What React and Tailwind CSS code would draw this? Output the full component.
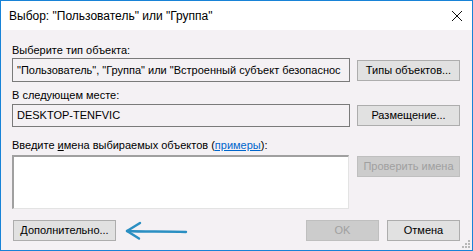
export default function App() {
  const font = { fontFamily: '"Liberation Sans", Arial, sans-serif' }
  const btn = 'h-[21px] border border-[#adadad] bg-[#e1e1e1] text-[11px] text-black flex items-center justify-center whitespace-nowrap'
  const btnOff = 'h-[21px] border border-[#bfbfbf] bg-[#cccccc] text-[11px] text-[#a0a0a0] flex items-center justify-center whitespace-nowrap'

  return (
    <div className="w-[473px] h-[251px] border border-[#1883d7] flex flex-col bg-[#f4f1f4]" style={font}>
      {/* Title bar */}
      <div className="h-[29px] bg-white flex items-center justify-between pl-[8px] pr-[8px] shrink-0">
        <span className="text-[12px] text-black leading-none">Выбор: "Пользователь" или "Группа"</span>
        <svg width="12" height="12" viewBox="0 0 12 12" className="mr-[1px]">
          <path d="M1 1l10 10M11 1L1 11" stroke="#111" strokeWidth="1" />
        </svg>
      </div>

      {/* Body */}
      <div className="flex-1 flex flex-col px-[11px] pt-[13px] relative">
        <div className="text-[11px] leading-[15px] text-black">Выберите тип объекта:</div>
        <div className="flex items-center">
          <div className="w-[338px] h-[24px] border border-[#7a7a7a] px-[4px] flex items-center overflow-hidden whitespace-nowrap text-[11px] text-black">
            "Пользователь", "Группа" или "Встроенный субъект безопаснос
          </div>
          <div className={`${btn} w-[103px] ml-[7px]`}>Типы объектов...</div>
        </div>

        <div className="text-[11px] leading-[15px] text-black mt-[6px]">В следующем месте:</div>
        <div className="flex items-center mt-[1px]">
          <div className="w-[338px] h-[23px] border border-[#7a7a7a] px-[4px] flex items-center text-[11px] text-black">
            DESKTOP-TENFVIC
          </div>
          <div className={`${btn} w-[103px] ml-[7px]`}>Размещение...</div>
        </div>

        <div className="text-[11px] leading-[15px] text-black mt-[11px] whitespace-nowrap">
          Введите <span className="underline">и</span>мена выбираемых объектов (<span className="text-[#0066cc] underline">примеры</span>):
        </div>
        <div className="flex items-start mt-[2px]">
          <div className="w-[337px] h-[54px] bg-white border-t-[2px] border-l-[2px] border-t-[#a0a0a0] border-l-[#a0a0a0] border-r border-b border-r-[#e3e3e3] border-b-[#e3e3e3]" />
          <div className={`${btnOff} w-[103px] ml-[8px] mt-[1px]`}>Проверить имена</div>
        </div>

        <div className="flex items-center mt-[11px]">
          <div className={`${btn} w-[103px] ml-[1px]`}>Дополнительно...</div>
          <svg width="66" height="20" viewBox="0 0 66 20" className="ml-[8px]">
            <path d="M3 10 C 20 11, 40 10, 62 11" stroke="#2a8fc2" strokeWidth="2.4" fill="none" strokeLinecap="round" />
            <path d="M16 2 L3 10 L15 17.5" stroke="#2a8fc2" strokeWidth="2.4" fill="none" strokeLinecap="round" strokeLinejoin="round" />
          </svg>
          <div className="flex-1" />
          <div className={`${btnOff} w-[73px]`}>OK</div>
          <div className={`${btn} w-[73px] ml-[8px] mr-[1px]`}>Отмена</div>
        </div>

        {/* size grip */}
        <svg width="8" height="8" viewBox="0 0 8 8" className="absolute right-[2px] bottom-[2px]">
          {[[6, 0], [3, 3], [6, 3], [0, 6], [3, 6], [6, 6]].map(([x, y], i) => (
            <rect key={i} x={x} y={y} width="2" height="2" fill="#b8b8b8" />
          ))}
        </svg>
      </div>
    </div>
  )
}
